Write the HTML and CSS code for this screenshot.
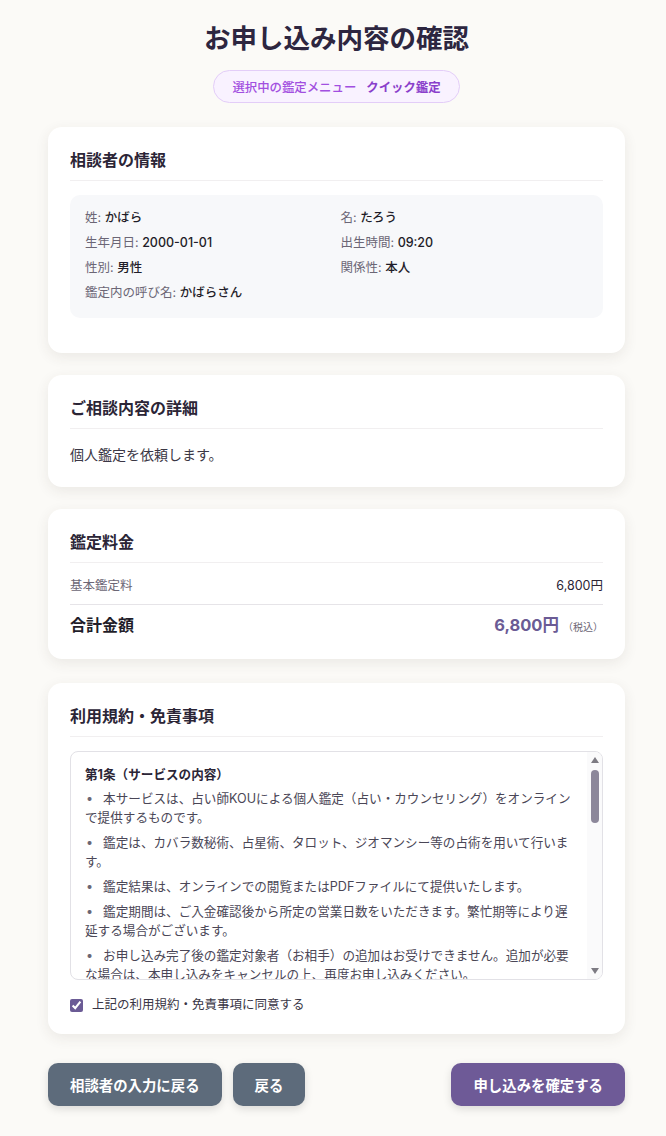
FILE: index.html
```html
<!DOCTYPE html>
<html lang="ja">
<head>
<meta charset="utf-8">
<title>お申し込み内容の確認</title>
<link rel="stylesheet" href="styles.css">
</head>
<body>
<div class="page">
  <h1 class="title">お申し込み内容の確認</h1>
  <div class="badge-row">
    <span class="badge"><span class="badge-label">選択中の鑑定メニュー</span><span class="badge-value">クイック鑑定</span></span>
  </div>

  <section class="card card-first">
    <h2 class="card-title">相談者の情報</h2>
    <div class="info">
      <div class="info-item"><span class="lbl">姓:</span> <span class="val">かばら</span></div>
      <div class="info-item"><span class="lbl">名:</span> <span class="val">たろう</span></div>
      <div class="info-item"><span class="lbl">生年月日:</span> <span class="val">2000-01-01</span></div>
      <div class="info-item"><span class="lbl">出生時間:</span> <span class="val">09:20</span></div>
      <div class="info-item"><span class="lbl">性別:</span> <span class="val">男性</span></div>
      <div class="info-item"><span class="lbl">関係性:</span> <span class="val">本人</span></div>
      <div class="info-item info-wide"><span class="lbl">鑑定内の呼び名:</span> <span class="val">かばらさん</span></div>
    </div>
  </section>

  <section class="card">
    <h2 class="card-title">ご相談内容の詳細</h2>
    <p class="detail">個人鑑定を依頼します。</p>
  </section>

  <section class="card">
    <h2 class="card-title">鑑定料金</h2>
    <div class="fee-row">
      <span class="fee-label">基本鑑定料</span>
      <span class="fee-value">6,800円</span>
    </div>
    <div class="total-row">
      <span class="total-label">合計金額</span>
      <span class="total-value"><span class="total-price">6,800円</span><span class="tax">（税込）</span></span>
    </div>
  </section>

  <section class="card card-terms">
    <h2 class="card-title">利用規約・免責事項</h2>
    <div class="terms">
      <div class="terms-content">
        <h3 class="terms-head">第1条（サービスの内容）</h3>
        <p class="terms-item"><span class="dot">•</span>本サービスは、占い師KOUによる個人鑑定（占い・カウンセリング）をオンラインで提供するものです。</p>
        <p class="terms-item"><span class="dot">•</span>鑑定は、カバラ数秘術、占星術、タロット、ジオマンシー等の占術を用いて行います。</p>
        <p class="terms-item"><span class="dot">•</span>鑑定結果は、オンラインでの閲覧またはPDFファイルにて提供いたします。</p>
        <p class="terms-item"><span class="dot">•</span>鑑定期間は、ご入金確認後から所定の営業日数をいただきます。繁忙期等により遅延する場合がございます。</p>
        <p class="terms-item"><span class="dot">•</span>お申し込み完了後の鑑定対象者（お相手）の追加はお受けできません。追加が必要な場合は、本申し込みをキャンセルの上、再度お申し込みください。</p>
      </div>
      <div class="scrollbar" aria-hidden="true">
        <span class="sb-arrow sb-up"></span>
        <div class="sb-track"><div class="sb-thumb"></div></div>
        <span class="sb-arrow sb-down"></span>
      </div>
    </div>
    <label class="agree"><input type="checkbox" class="agree-box" checked><span>上記の利用規約・免責事項に同意する</span></label>
  </section>

  <div class="actions">
    <div class="actions-left">
      <button class="btn btn-gray">相談者の入力に戻る</button>
      <button class="btn btn-gray">戻る</button>
    </div>
    <button class="btn btn-primary">申し込みを確定する</button>
  </div>
</div>
</body>
</html>
```

FILE: styles.css
```css
html, body {
  margin: 0;
  padding: 0;
}
body {
  background: #fbfaf7;
  font-family: Inter, "Noto Sans CJK JP", sans-serif;
  color: #2b2536;
}
.page {
  margin: 0 41px 0 48px;
  padding: 20px 0 20px;
}
.title {
  margin: 0;
  font-size: 26.5px;
  line-height: 36px;
  font-weight: 700;
  text-align: center;
  color: #2d2640;
}
.badge-row {
  display: flex;
  justify-content: center;
  margin-top: 14px;
}
.badge {
  display: inline-flex;
  align-items: center;
  gap: 10px;
  height: 33px;
  box-sizing: border-box;
  padding: 0 18px;
  border: 1px solid #e3cdf8;
  background: #f9f2ff;
  border-radius: 999px;
  font-size: 12.4px;
}
.badge-label {
  font-weight: 500;
  color: #a24fe0;
}
.badge-value {
  font-weight: 700;
  color: #8a3fcb;
}
.card {
  background: #fff;
  border-radius: 14px;
  box-shadow: 0 4px 14px rgba(70, 60, 40, 0.09);
  padding: 22px 22px 21px;
  margin-top: 22px;
}
.card-first {
  margin-top: 24px;
}
.card-terms {
  margin-top: 24px;
  padding-bottom: 20px;
}
.card-title {
  margin: 0;
  font-size: 16px;
  line-height: 22px;
  font-weight: 700;
  color: #2b2536;
  padding-bottom: 9px;
  border-bottom: 1px solid #f1eff0;
}
.info {
  margin: 14px 0 14px;
  background: #f7f8fa;
  border-radius: 10px;
  padding: 14px 15px 16px;
  display: grid;
  grid-template-columns: 1fr 1fr;
  column-gap: 8px;
  row-gap: 7px;
  font-size: 12.5px;
  line-height: 18px;
}
.lbl {
  color: #6b6675;
}
.val {
  color: #1f1d29;
  font-weight: 500;
}
.detail {
  margin: 15px 0 0;
  font-size: 14px;
  line-height: 22px;
  color: #3b3745;
}
.fee-row {
  display: flex;
  justify-content: space-between;
  align-items: center;
  margin-top: 12px;
  line-height: 22px;
  padding-bottom: 7px;
  border-bottom: 1px solid #e6e4e8;
  font-size: 12.5px;
}
.fee-label {
  color: #6b6675;
}
.fee-value {
  color: #2b2536;
}
.total-row {
  display: flex;
  justify-content: space-between;
  align-items: center;
  height: 33px;
  box-sizing: border-box;
  padding-top: 7px;
  line-height: 24px;
}
.total-label {
  font-size: 16px;
  font-weight: 700;
  color: #1f1d29;
}
.total-value {
  display: flex;
  align-items: baseline;
  line-height: 24px;
}
.total-price {
  font-size: 16.5px;
  font-weight: 700;
  color: #6b5b95;
}
.tax {
  font-size: 10px;
  line-height: 1;
  color: #6b6675;
  margin-left: 4px;
}
.terms {
  margin-top: 14px;
  height: 229px;
  box-sizing: border-box;
  border: 1px solid #e2e1e6;
  border-radius: 8px;
  overflow: hidden;
  display: flex;
}
.terms-content {
  flex: 1;
  min-width: 0;
  overflow: hidden;
  padding: 13px 14px 0;
  font-size: 12.6px;
  color: #4a4656;
}
.terms-head {
  margin: 0 0 4px;
  font-size: 12.6px;
  line-height: 20px;
  font-weight: 700;
  color: #2b2536;
}
.terms-item {
  margin: 0 0 6px;
  line-height: 19px;
}
.dot {
  margin: 0 10px 0 1px;
  color: #6b6675;
}
.scrollbar {
  flex: none;
  width: 15px;
  display: flex;
  flex-direction: column;
  align-items: center;
  background: #fafafb;
}
.sb-arrow {
  width: 0;
  height: 0;
  border-left: 4px solid transparent;
  border-right: 4px solid transparent;
}
.sb-up {
  margin-top: 5px;
  border-bottom: 6px solid #7d7b83;
}
.sb-down {
  margin-bottom: 5px;
  border-top: 6px solid #7d7b83;
}
.sb-track {
  flex: 1;
  align-self: stretch;
  display: flex;
  justify-content: center;
  padding-top: 7px;
}
.sb-thumb {
  width: 8px;
  height: 53px;
  border-radius: 4px;
  background: #8c879a;
}
.agree {
  display: flex;
  align-items: center;
  margin-top: 16px;
  font-size: 12.5px;
  line-height: 18px;
  color: #3a3645;
}
.agree-box {
  width: 13px;
  height: 13px;
  margin: 0 9px 0 0;
  accent-color: #6b5b95;
}
.actions {
  display: flex;
  justify-content: space-between;
  margin-top: 29px;
}
.actions-left {
  display: flex;
  gap: 11px;
}
.btn {
  height: 43px;
  padding: 0 22px;
  border: none;
  border-radius: 10px;
  font-family: Inter, "Noto Sans CJK JP", sans-serif;
  font-size: 14.4px;
  font-weight: 700;
  color: #fff;
  box-shadow: 0 3px 8px rgba(0, 0, 0, 0.13);
  cursor: pointer;
}
.btn-gray {
  background: #5d6b7b;
}
.btn-primary {
  background: #6e5a97;
}
```
